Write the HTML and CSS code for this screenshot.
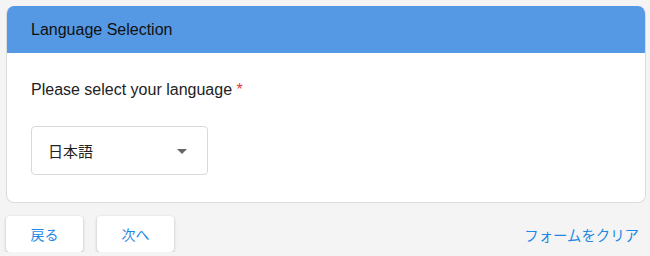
FILE: index.html
```html
<!DOCTYPE html>
<html lang="ja">
<head>
<meta charset="utf-8">
<link rel="stylesheet" href="styles.css">
</head>
<body>
<div class="page">
  <section class="card">
    <header class="card-header">Language Selection</header>
    <div class="card-body">
      <label class="field-label">Please select your language <span class="req">*</span></label>
      <div class="select">
        <span class="select-value">日本語</span>
        <span class="caret"></span>
      </div>
    </div>
  </section>
  <div class="actions">
    <button class="btn">戻る</button>
    <button class="btn">次へ</button>
    <a class="clear-link">フォームをクリア</a>
  </div>
</div>
</body>
</html>
```
FILE: styles.css
```css
html, body {
  margin: 0;
  padding: 0;
  background: #f4f4f4;
}
body {
  font-family: "Liberation Sans", Arial, "Noto Sans CJK JP", sans-serif;
  color: #222;
}
.page {
  padding: 6px 4px 0 6px;
}
.card {
  background: #fff;
  border: 1px solid #dcdcdc;
  border-top: none;
  border-radius: 8px;
  overflow: hidden;
  height: 197px;
  box-sizing: border-box;
}
.card-header {
  background: #5598e3;
  height: 47px;
  display: flex;
  align-items: center;
  padding-left: 24px;
  font-size: 16px;
  color: #111;
}
.card-body {
  padding: 27px 24px 0 24px;
}
.field-label {
  display: block;
  font-size: 16px;
  color: #222;
  line-height: 20px;
}
.req {
  color: #e53935;
}
.select {
  margin-top: 26px;
  width: 177px;
  height: 49px;
  box-sizing: border-box;
  border: 1px solid #d9d9d9;
  border-radius: 4px;
  display: flex;
  align-items: center;
  justify-content: space-between;
  padding: 0 20px 0 16px;
  font-size: 15px;
  color: #222;
}
.caret {
  width: 0;
  height: 0;
  border-left: 5px solid transparent;
  border-right: 5px solid transparent;
  border-top: 5px solid #666;
  margin-top: 1px;
}
.actions {
  display: flex;
  align-items: center;
  gap: 14px;
  margin-top: 13px;
}
.btn {
  width: 77px;
  height: 36px;
  background: #fff;
  border: none;
  border-radius: 4px;
  box-shadow: 0 1px 3px rgba(0,0,0,0.25);
  font-family: "Noto Sans CJK JP", sans-serif;
  font-size: 14px;
  color: #1e88e5;
  padding: 0;
}
.clear-link {
  margin-left: auto;
  margin-right: 7px;
  font-family: "Noto Sans CJK JP", sans-serif;
  font-size: 14.4px;
  color: #1e88e5;
}
```
